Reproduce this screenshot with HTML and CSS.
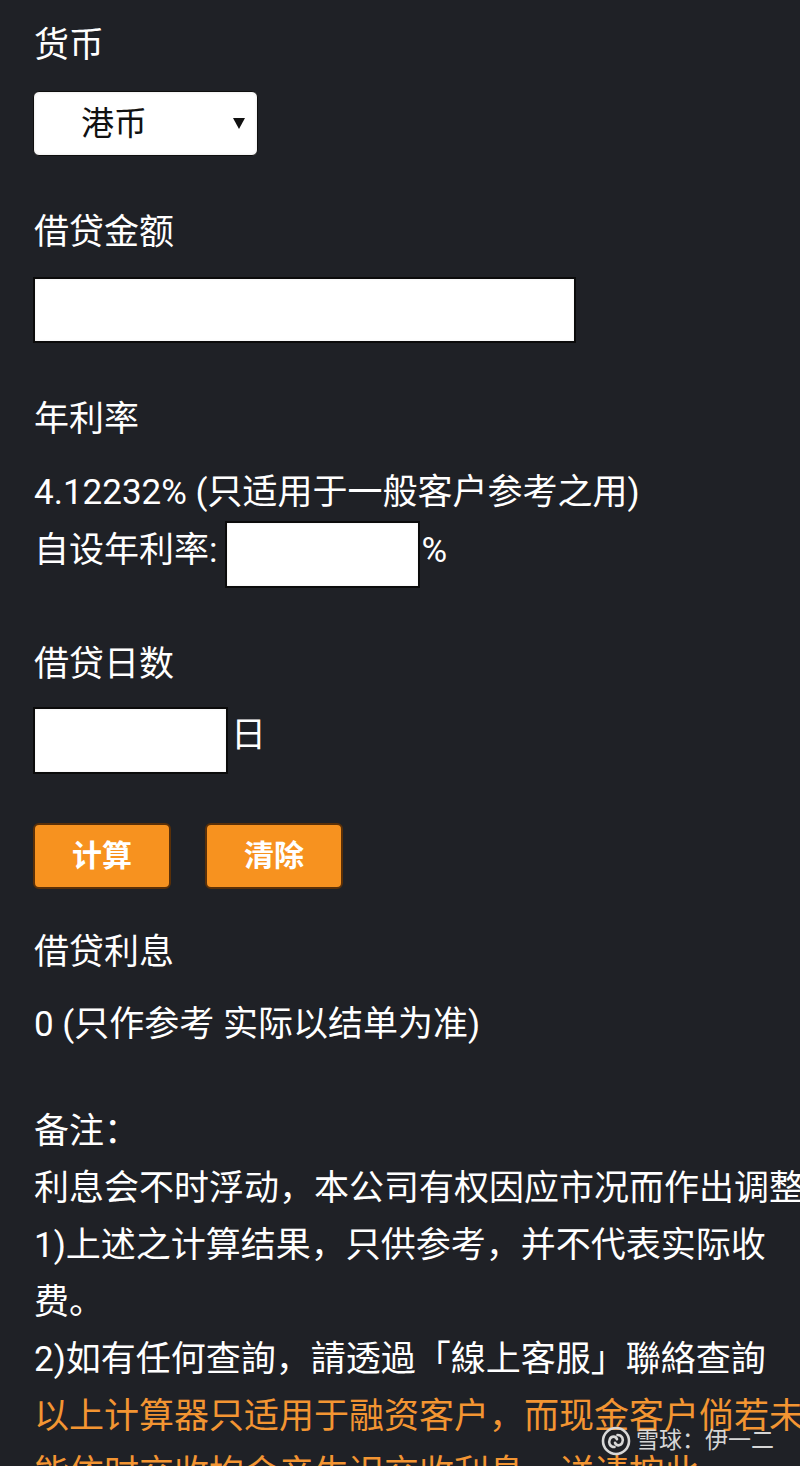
FILE: index.html
```html
<!DOCTYPE html>
<html lang="zh-CN">
<head>
<meta charset="utf-8">
<title>借贷利息计算器</title>
<link rel="stylesheet" href="styles.css">
</head>
<body>
<div class="page">
  <div class="label first">货币</div>
  <div class="select">
    <span class="select-text">港币</span>
    <svg class="arrow" width="12" height="11" viewBox="0 0 12 11"><path d="M0 0 H12 L6 11 Z" fill="#111"/></svg>
  </div>

  <div class="label">借贷金额</div>
  <div class="field field-wide ctl"></div>

  <div class="label">年利率</div>
  <div class="text ctl">4.12232% (只适用于一般客户参考之用)</div>
  <div class="row rate-row">
    <span class="row-text">自设年利率:</span>
    <div class="field field-rate"></div>
    <span class="row-text pct">%</span>
  </div>

  <div class="label">借贷日数</div>
  <div class="row days-row">
    <div class="field field-days"></div>
    <span class="row-text day">日</span>
  </div>

  <div class="buttons">
    <div class="btn">计算</div>
    <div class="btn">清除</div>
  </div>

  <div class="label label-result">借贷利息</div>
  <div class="text result-text">0 (只作参考 实际以结单为准)</div>

  <div class="notes">
    <div class="line">备注：</div>
    <div class="line">利息会不时浮动，本公司有权因应市况而作出调整。</div>
    <div class="line">1)上述之计算结果，只供参考，并不代表实际收</div>
    <div class="line">费。</div>
    <div class="line">2)如有任何查詢，請透過「線上客服」聯絡查詢</div>
    <div class="line orange">以上计算器只适用于融资客户，而现金客户倘若未</div>
    <div class="line orange">能依时交收均会产生迟交收利息，详请按此</div>
  </div>
</div>

<div class="watermark">
  <svg class="wm-logo" width="30" height="30" viewBox="0 0 30 30">
    <circle cx="15" cy="15" r="13" fill="none" stroke="#d8d8d8" stroke-width="2.6"/>
    <path d="M13.5 21 C8.5 21 7.3 16.5 8.8 13.2 C10.4 9.8 14.8 9.8 16 13.2" fill="none" stroke="#d8d8d8" stroke-width="2.6" stroke-linecap="round"/>
    <path d="M16.5 9 C21.5 9 22.7 13.5 21.2 16.8 C19.6 20.2 15.2 20.2 14 16.8" fill="none" stroke="#d8d8d8" stroke-width="2.6" stroke-linecap="round"/>
  </svg>
  <span class="wm-text">雪球：伊一二</span>
</div>
</body>
</html>
```

FILE: styles.css
```css
html, body {
  margin: 0;
  padding: 0;
}

body {
  width: 800px;
  height: 1466px;
  overflow: hidden;
  position: relative;
  background: #1f2126;
  color: #ffffff;
  font-family: Roboto, "Noto Sans CJK SC", sans-serif;
  font-size: 35px;
  line-height: 57px;
}

.page {
  padding: 17px 0 0 33px;
}

.label {
  margin-top: 47.5px;
  white-space: nowrap;
  padding-left: 1px;
}

.label.first {
  margin-top: 0;
}

.label.label-result {
  margin-top: 35px;
}

.ctl {
  margin-top: 16.5px;
}

.result-text {
  margin-top: 15px;
}

.text {
  white-space: nowrap;
  padding-left: 1px;
}

.select {
  margin-top: 17px;
  width: 225px;
  height: 65px;
  box-sizing: border-box;
  background: #ffffff;
  border: 1px solid #0e0e0e;
  border-radius: 6px;
  display: flex;
  align-items: center;
  justify-content: space-between;
  padding: 0 12px 0 47px;
  box-shadow: inset 0 0 3px rgba(0, 0, 0, 0.12);
}

.select-text {
  color: #111111;
  font-size: 33px;
  line-height: 40px;
}

.arrow {
  display: block;
}

.field {
  background: #ffffff;
  border: 2px solid #0b0b0b;
  box-sizing: border-box;
  box-shadow: inset 0 0 2px rgba(0, 0, 0, 0.1);
}

.field-wide {
  width: 543px;
  height: 66px;
}

.row {
  display: flex;
  align-items: center;
  white-space: nowrap;
}

.row-text {
  padding-left: 1px;
}

.rate-row .row-text {
  margin-bottom: 8px;
}

.field-rate {
  width: 195px;
  height: 67px;
  margin-left: 8px;
}

.rate-row .pct {
  margin-left: 1px;
  padding-left: 0;
}

.days-row {
  margin-top: 14px;
}

.field-days {
  width: 195px;
  height: 67px;
}

.days-row .day {
  margin-left: 3px;
  margin-bottom: 9px;
  padding-left: 0;
}

.buttons {
  margin-top: 49px;
  display: flex;
  gap: 34px;
}

.btn {
  width: 138px;
  height: 66px;
  box-sizing: border-box;
  background: #f7921f;
  border: 2px solid #5a3008;
  border-radius: 6px;
  color: #ffffff;
  font-weight: bold;
  font-size: 30px;
  display: flex;
  align-items: center;
  justify-content: center;
  line-height: 1;
}

.notes {
  margin-top: 50px;
}

.line {
  white-space: nowrap;
  padding-left: 1px;
}

.orange {
  color: #f39532;
}

.watermark {
  position: absolute;
  left: 601px;
  top: 1426px;
  display: flex;
  align-items: center;
  gap: 5px;
}

.wm-logo {
  display: block;
}

.wm-text {
  color: #d6d6d6;
  font-size: 23px;
  line-height: 28px;
  white-space: nowrap;
}
```
